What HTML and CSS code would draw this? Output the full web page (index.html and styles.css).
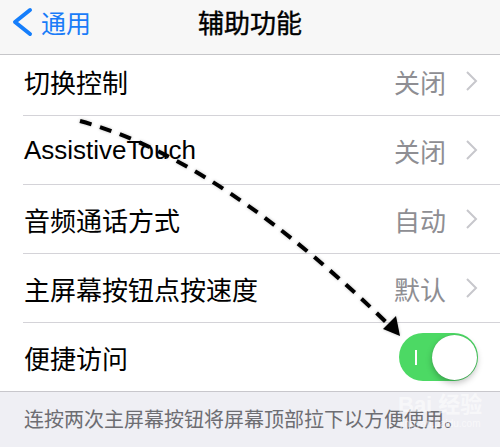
FILE: index.html
```html
<!DOCTYPE html>
<html lang="zh-CN">
<head>
  <meta charset="UTF-8" />
  <title>辅助功能</title>
  <link rel="stylesheet" href="styles.css">
</head>
<body>
  <div class="screen">
    <div class="navbar">
      <div class="back">
        <svg class="back-icon" width="24" height="30" viewBox="0 0 24 30">
          <path d="M20 3 L5 15 L20 27" fill="none" stroke="#157efb" stroke-width="4" stroke-linecap="round" stroke-linejoin="round"/>
        </svg>
        <span>通用</span>
      </div>
      <div class="title">辅助功能</div>
      <div></div>
    </div>

    <div class="list">
      <div class="cell">
        <div class="cell-body">
          <span class="label">切换控制</span>
          <span class="value">关闭</span>
          <svg class="chevron" width="13" height="22" viewBox="0 0 13 22"><path d="M2 2 L11 11 L2 20" fill="none" stroke="#c7c7cc" stroke-width="2"/></svg>
        </div>
      </div>
      <div class="cell">
        <div class="cell-body">
          <span class="label latin">AssistiveTouch</span>
          <span class="value">关闭</span>
          <svg class="chevron" width="13" height="22" viewBox="0 0 13 22"><path d="M2 2 L11 11 L2 20" fill="none" stroke="#c7c7cc" stroke-width="2"/></svg>
        </div>
      </div>
      <div class="cell">
        <div class="cell-body">
          <span class="label">音频通话方式</span>
          <span class="value">自动</span>
          <svg class="chevron" width="13" height="22" viewBox="0 0 13 22"><path d="M2 2 L11 11 L2 20" fill="none" stroke="#c7c7cc" stroke-width="2"/></svg>
        </div>
      </div>
      <div class="cell">
        <div class="cell-body">
          <span class="label">主屏幕按钮点按速度</span>
          <span class="value">默认</span>
          <svg class="chevron" width="13" height="22" viewBox="0 0 13 22"><path d="M2 2 L11 11 L2 20" fill="none" stroke="#c7c7cc" stroke-width="2"/></svg>
        </div>
      </div>
      <div class="cell">
        <div class="cell-body">
          <span class="label">便捷访问</span>
          <div class="switch on">
            <span class="switch-mark"></span>
            <span class="switch-knob"></span>
          </div>
        </div>
      </div>
    </div>

    <div class="footer">连按两次主屏幕按钮将屏幕顶部拉下以方便使用。</div>

    <!-- hand drawn arrow over the screenshot -->
    <svg class="arrow" width="500" height="447" viewBox="0 0 500 447">
      <defs>
        <filter id="soft" x="-10%" y="-10%" width="120%" height="120%">
          <feDropShadow dx="0" dy="0" stdDeviation="1.5" flood-color="#000" flood-opacity="0.25"/>
        </filter>
      </defs>
      <g filter="url(#soft)">
        <path d="M80 121 C150 140 250 190 388 324" fill="none" stroke="#000" stroke-width="4" stroke-dasharray="12 9"/>
        <polygon points="383,329 396,316 400,336" fill="#000"/>
      </g>
    </svg>

    <div class="watermark">
      <span class="wm-big">Bai 经验</span>
      <span class="wm-small">jingyan.baidu.com</span>
    </div>
  </div>
</body>
</html>
```

FILE: styles.css
```css
body {
  margin: 0;
  background: #efeff4;
  font-family: "Liberation Sans", "Noto Sans CJK SC", sans-serif;
  color: #000;
}
.screen {
  position: relative;
  width: 500px;
  height: 447px;
  overflow: hidden;
  background: #efeff4;
}
.navbar {
  position: relative;
  z-index: 1;
  display: grid;
  grid-template-columns: 1fr auto 1fr;
  align-items: center;
  height: 43px;
  padding-bottom: 11px;
  background: #f7f7f7;
  border-bottom: 1px solid #c6c6c9;
}
.back {
  display: flex;
  align-items: center;
  padding-left: 10px;
  color: #1a7cf8;
  font-family: "Noto Sans CJK SC", sans-serif;
  font-size: 25px;
}
.back-icon {
  margin-right: 7px;
}
.title {
  font-family: "Noto Sans CJK SC", sans-serif;
  font-size: 26px;
  font-weight: 400;
  -webkit-text-stroke: 0.4px #000;
}
.list {
  margin-top: -8px;
  background: #fff;
  border-bottom: 1px solid #c8c7cc;
}
.cell {
  padding-left: 23px;
}
.cell-body {
  display: flex;
  align-items: center;
  height: 68px;
  padding-right: 22px;
  border-bottom: 1px solid #d4d3d8;
}
.cell:last-child .cell-body {
  border-bottom: none;
}
.label {
  flex: 1;
  font-family: "Noto Sans CJK SC", sans-serif;
  font-size: 26px;
  padding-left: 1px;
}
.label.latin {
  font-family: "Liberation Sans", "Noto Sans CJK SC", sans-serif;
}
.value {
  font-family: "Noto Sans CJK SC", sans-serif;
  font-size: 26px;
  color: #8e8e93;
  margin-right: 19px;
}
.chevron {
  display: block;
}
.switch {
  width: 79px;
  height: 48px;
  border-radius: 24px;
  background: #4cd964;
  display: flex;
  align-items: center;
  justify-content: space-between;
  padding: 0 1px 0 16px;
  box-sizing: border-box;
}
.switch-mark {
  width: 2px;
  height: 15px;
  background: #fff;
}
.switch-knob {
  width: 45px;
  height: 45px;
  border-radius: 50%;
  background: #fff;
  box-shadow: 0 3px 6px rgba(0, 0, 0, 0.25), 0 0 1px rgba(0, 0, 0, 0.2);
}
.footer {
  padding: 12px 24px 0;
  font-family: "Noto Sans CJK SC", sans-serif;
  font-size: 20px;
  color: #6d6d72;
  white-space: nowrap;
}
.arrow {
  position: absolute;
  top: 0;
  left: 0;
  pointer-events: none;
}
.watermark {
  position: absolute;
  left: 398px;
  top: 392px;
  display: flex;
  flex-direction: column;
  align-items: center;
  color: rgba(255, 255, 255, 0.55);
  font-family: "Liberation Sans", "Noto Sans CJK SC", sans-serif;
  pointer-events: none;
}
.wm-big {
  font-size: 22px;
  font-weight: bold;
  line-height: 26px;
}
.wm-small {
  font-size: 10px;
  line-height: 12px;
}
```
